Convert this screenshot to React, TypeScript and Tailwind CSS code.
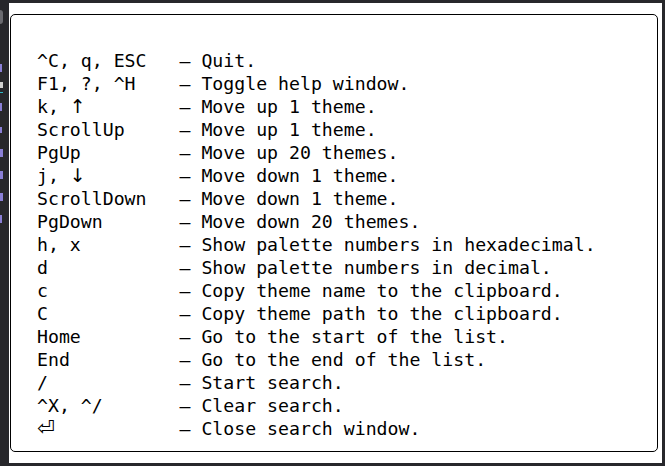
import React from "react";

const arrow = (c: string) => (
  <span className="inline-block w-[11px] font-['DejaVu_Sans',sans-serif] text-[19px] leading-[23px] text-black align-top">{c}</span>
);

const rows: [React.ReactNode, string][] = [
  ["^C, q, ESC", "Quit."],
  ["F1, ?, ^H", "Toggle help window."],
  [<>k, {arrow("↑")}</>, "Move up 1 theme."],
  ["ScrollUp", "Move up 1 theme."],
  ["PgUp", "Move up 20 themes."],
  [<>j, {arrow("↓")}</>, "Move down 1 theme."],
  ["ScrollDown", "Move down 1 theme."],
  ["PgDown", "Move down 20 themes."],
  ["h, x", "Show palette numbers in hexadecimal."],
  ["d", "Show palette numbers in decimal."],
  ["c", "Copy theme name to the clipboard."],
  ["C", "Copy theme path to the clipboard."],
  ["Home", "Go to the start of the list."],
  ["End", "Go to the end of the list."],
  ["/", "Start search."],
  ["^X, ^/", "Clear search."],
  [<span className="inline-block w-[22px] font-['DejaVu_Sans',sans-serif] text-[21px] leading-[23px] align-top">⏎</span>, "Close search window."],
];

export default function App() {
  return (
    <div className="w-[665px] h-[466px] bg-[#27272b] flex overflow-hidden">
      <div className="w-[9px] flex flex-col pt-[10px]">
        <div className="h-[14px] w-[3px] bg-[#6b6b70] rounded-r" />
        <div className="h-[40px]" />
        <div className="h-[8px] w-[2px] bg-[#8a7fd6]" />
        <div className="h-[10px]" />
        <div className="h-[6px] w-[3px] bg-[#d0d0d0]" />
        <div className="h-[4px]" />
        <div className="h-[1px] w-[3px] bg-[#2fb8c8]" />
        <div className="h-[10px]" />
        <div className="h-[8px] w-[2px] bg-[#8a7fd6]" />
        <div className="h-[16px]" />
        <div className="h-[6px] w-[2px] bg-[#8a7fd6]" />
        <div className="h-[16px]" />
        <div className="h-[8px] w-[3px] bg-[#8a7fd6]" />
        <div className="h-[14px]" />
        <div className="h-[8px] w-[3px] bg-[#8a7fd6]" />
        <div className="h-[14px]" />
        <div className="h-[8px] w-[3px] bg-[#8a7fd6]" />
        <div className="h-[14px]" />
        <div className="h-[8px] w-[2px] bg-[#8a7fd6]" />
      </div>
      <div className="mt-[3px] w-[653px] h-[460px] bg-white pt-[11px] pl-[1px] pr-[4px] pb-[11px]">
        <div className="h-full border border-black rounded-[5px] pl-[26px] pt-[34px] font-['DejaVu_Sans_Mono',monospace] text-[18.2px] leading-[23px] text-black">
          {rows.map(([k, d], i) => (
            <div key={i} className="flex whitespace-pre h-[23px]">
              <span className="w-[142.5px] shrink-0 whitespace-pre">{k}</span>
              <span>— {d}</span>
            </div>
          ))}
        </div>
      </div>
    </div>
  );
}
